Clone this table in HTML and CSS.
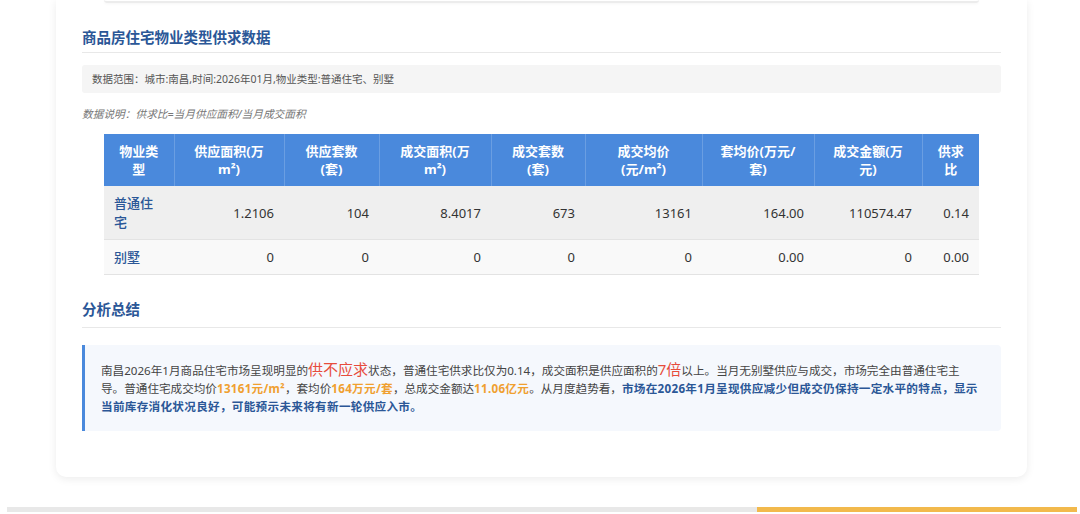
FILE: index.html
```html
<!DOCTYPE html>
<html lang="zh-CN">
<head>
<meta charset="utf-8">
<title>商品房住宅物业类型供求数据</title>
<link rel="stylesheet" href="styles.css">
</head>
<body>
<div class="page">
  <div class="card">
    <div class="prev-box"></div>

    <h2 class="section-title">商品房住宅物业类型供求数据</h2>
    <div class="scope">数据范围：城市:南昌,时间:2026年01月,物业类型:普通住宅、别墅</div>
    <p class="note">数据说明：供求比=当月供应面积/当月成交面积</p>

    <div class="table-wrap">
      <table class="data-table">
        <colgroup>
          <col class="c1"><col class="c2"><col class="c3"><col class="c4"><col class="c5">
          <col class="c6"><col class="c7"><col class="c8"><col class="c9">
        </colgroup>
        <thead>
          <tr>
            <th>物业类<br>型</th>
            <th>供应面积(万<br>m²)</th>
            <th>供应套数<br>(套)</th>
            <th>成交面积(万<br>m²)</th>
            <th>成交套数<br>(套)</th>
            <th>成交均价<br>(元/m²)</th>
            <th>套均价(万元/<br>套)</th>
            <th>成交金额(万<br>元)</th>
            <th>供求<br>比</th>
          </tr>
        </thead>
        <tbody>
          <tr class="row-a">
            <td class="type">普通住宅</td>
            <td>1.2106</td>
            <td>104</td>
            <td>8.4017</td>
            <td>673</td>
            <td>13161</td>
            <td>164.00</td>
            <td>110574.47</td>
            <td>0.14</td>
          </tr>
          <tr class="row-b">
            <td class="type">别墅</td>
            <td>0</td>
            <td>0</td>
            <td>0</td>
            <td>0</td>
            <td>0</td>
            <td>0.00</td>
            <td>0</td>
            <td>0.00</td>
          </tr>
        </tbody>
      </table>
    </div>

    <h2 class="section-title second">分析总结</h2>
    <div class="summary">
      南昌2026年1月商品住宅市场呈现明显的<span class="hl-red">供不应求</span>状态，普通住宅供求比仅为0.14，成交面积是供应面积的<span class="hl-red">7倍</span>以上。当月无别墅供应与成交，市场完全由普通住宅主导。普通住宅成交均价<span class="hl-orange">13161元/m²</span>，套均价<span class="hl-orange">164万元/套</span>，总成交金额达<span class="hl-orange">11.06亿元</span>。从月度趋势看，<span class="hl-blue">市场在2026年1月呈现供应减少但成交仍保持一定水平的特点，显示当前库存消化状况良好，可能预示未来将有新一轮供应入市。</span>
    </div>
  </div>

  <div class="progress">
    <div class="progress-rest"></div>
    <div class="progress-active"></div>
  </div>
</div>
</body>
</html>
```

FILE: styles.css
```css
* {
  box-sizing: border-box;
}

html, body {
  margin: 0;
  padding: 0;
  background: #ffffff;
}

body {
  font-family: "Noto Sans", "Noto Sans CJK SC", sans-serif;
  color: #333;
  overflow: hidden;
}

.page {
  width: 1080px;
  height: 514px;
  display: flex;
  flex-direction: column;
}

.card {
  margin: 0 53px 0 56px;
  background: #fff;
  border-radius: 0 0 10px 10px;
  box-shadow: 0 2px 8px rgba(0, 0, 0, 0.08);
  padding: 0 26px 46px 26px;
}

.prev-box {
  height: 3px;
  margin: 0 22px;
  border-bottom: 2px solid #ececec;
  border-radius: 0 0 6px 6px;
  box-shadow: 0 1px 3px rgba(0, 0, 0, 0.04);
}

.section-title {
  margin: 23px 0 0 0;
  font-size: 14.5px;
  line-height: 22px;
  font-weight: 700;
  color: #2b5797;
  padding-bottom: 4px;
  border-bottom: 1px solid #e8e8e8;
}

.section-title.second {
  margin-top: 23px;
  padding-bottom: 7px;
}

.scope {
  margin-top: 12px;
  background: #f5f5f5;
  border-radius: 3px;
  height: 28px;
  line-height: 28px;
  padding: 0 10px;
  font-size: 10.5px;
  color: #555;
}

.note {
  margin: 12px 0 11px 0;
  font-size: 10.7px;
  line-height: 18px;
  font-style: italic;
  color: #777;
}

.table-wrap {
  margin: 0 22px;
}

.data-table {
  width: 100%;
  table-layout: fixed;
  border-collapse: collapse;
  font-size: 13px;
}

.c1 { width: 70px; }
.c2 { width: 110px; }
.c3 { width: 95px; }
.c4 { width: 112px; }
.c5 { width: 94px; }
.c6 { width: 117px; }
.c7 { width: 112px; }
.c8 { width: 108px; }
.c9 { width: 57px; }

.data-table th {
  background: #4a89dc;
  color: #fff;
  font-weight: 700;
  line-height: 18px;
  padding: 8px 6px;
  text-align: center;
  white-space: nowrap;
  border-left: 1px solid rgba(255, 255, 255, 0.18);
}

.data-table th:first-child {
  border-left: none;
}

.data-table td {
  padding: 8px 10px 7px 10px;
  line-height: 19px;
  text-align: right;
  color: #333;
  border-bottom: 1px solid #e3e3e3;
}

.data-table td.type {
  text-align: left;
  color: #2b5797;
  font-weight: 500;
}

.row-a td {
  background: #efefef;
}

.row-b td {
  background: #f9f9f9;
}

.summary {
  margin-top: 17px;
  background: #f5f8fd;
  border-left: 3px solid #4a89dc;
  border-radius: 0 4px 4px 0;
  padding: 17px 22px 15px 16px;
  font-size: 11.6px;
  line-height: 18px;
  color: #444;
}

.hl-red {
  color: #e74c3c;
  font-size: 15px;
  line-height: 1;
}

.hl-orange {
  color: #f0a030;
  font-weight: 700;
  letter-spacing: 0.3px;
}

.hl-blue {
  color: #2b5797;
  font-weight: 700;
  letter-spacing: 0.3px;
}

.progress {
  margin: 30px 3px 0 7px;
  display: flex;
  height: 5px;
}

.progress-rest {
  flex: 1;
  background: #e8e8e8;
}

.progress-active {
  width: 320px;
  background: #f2b94c;
}
```
